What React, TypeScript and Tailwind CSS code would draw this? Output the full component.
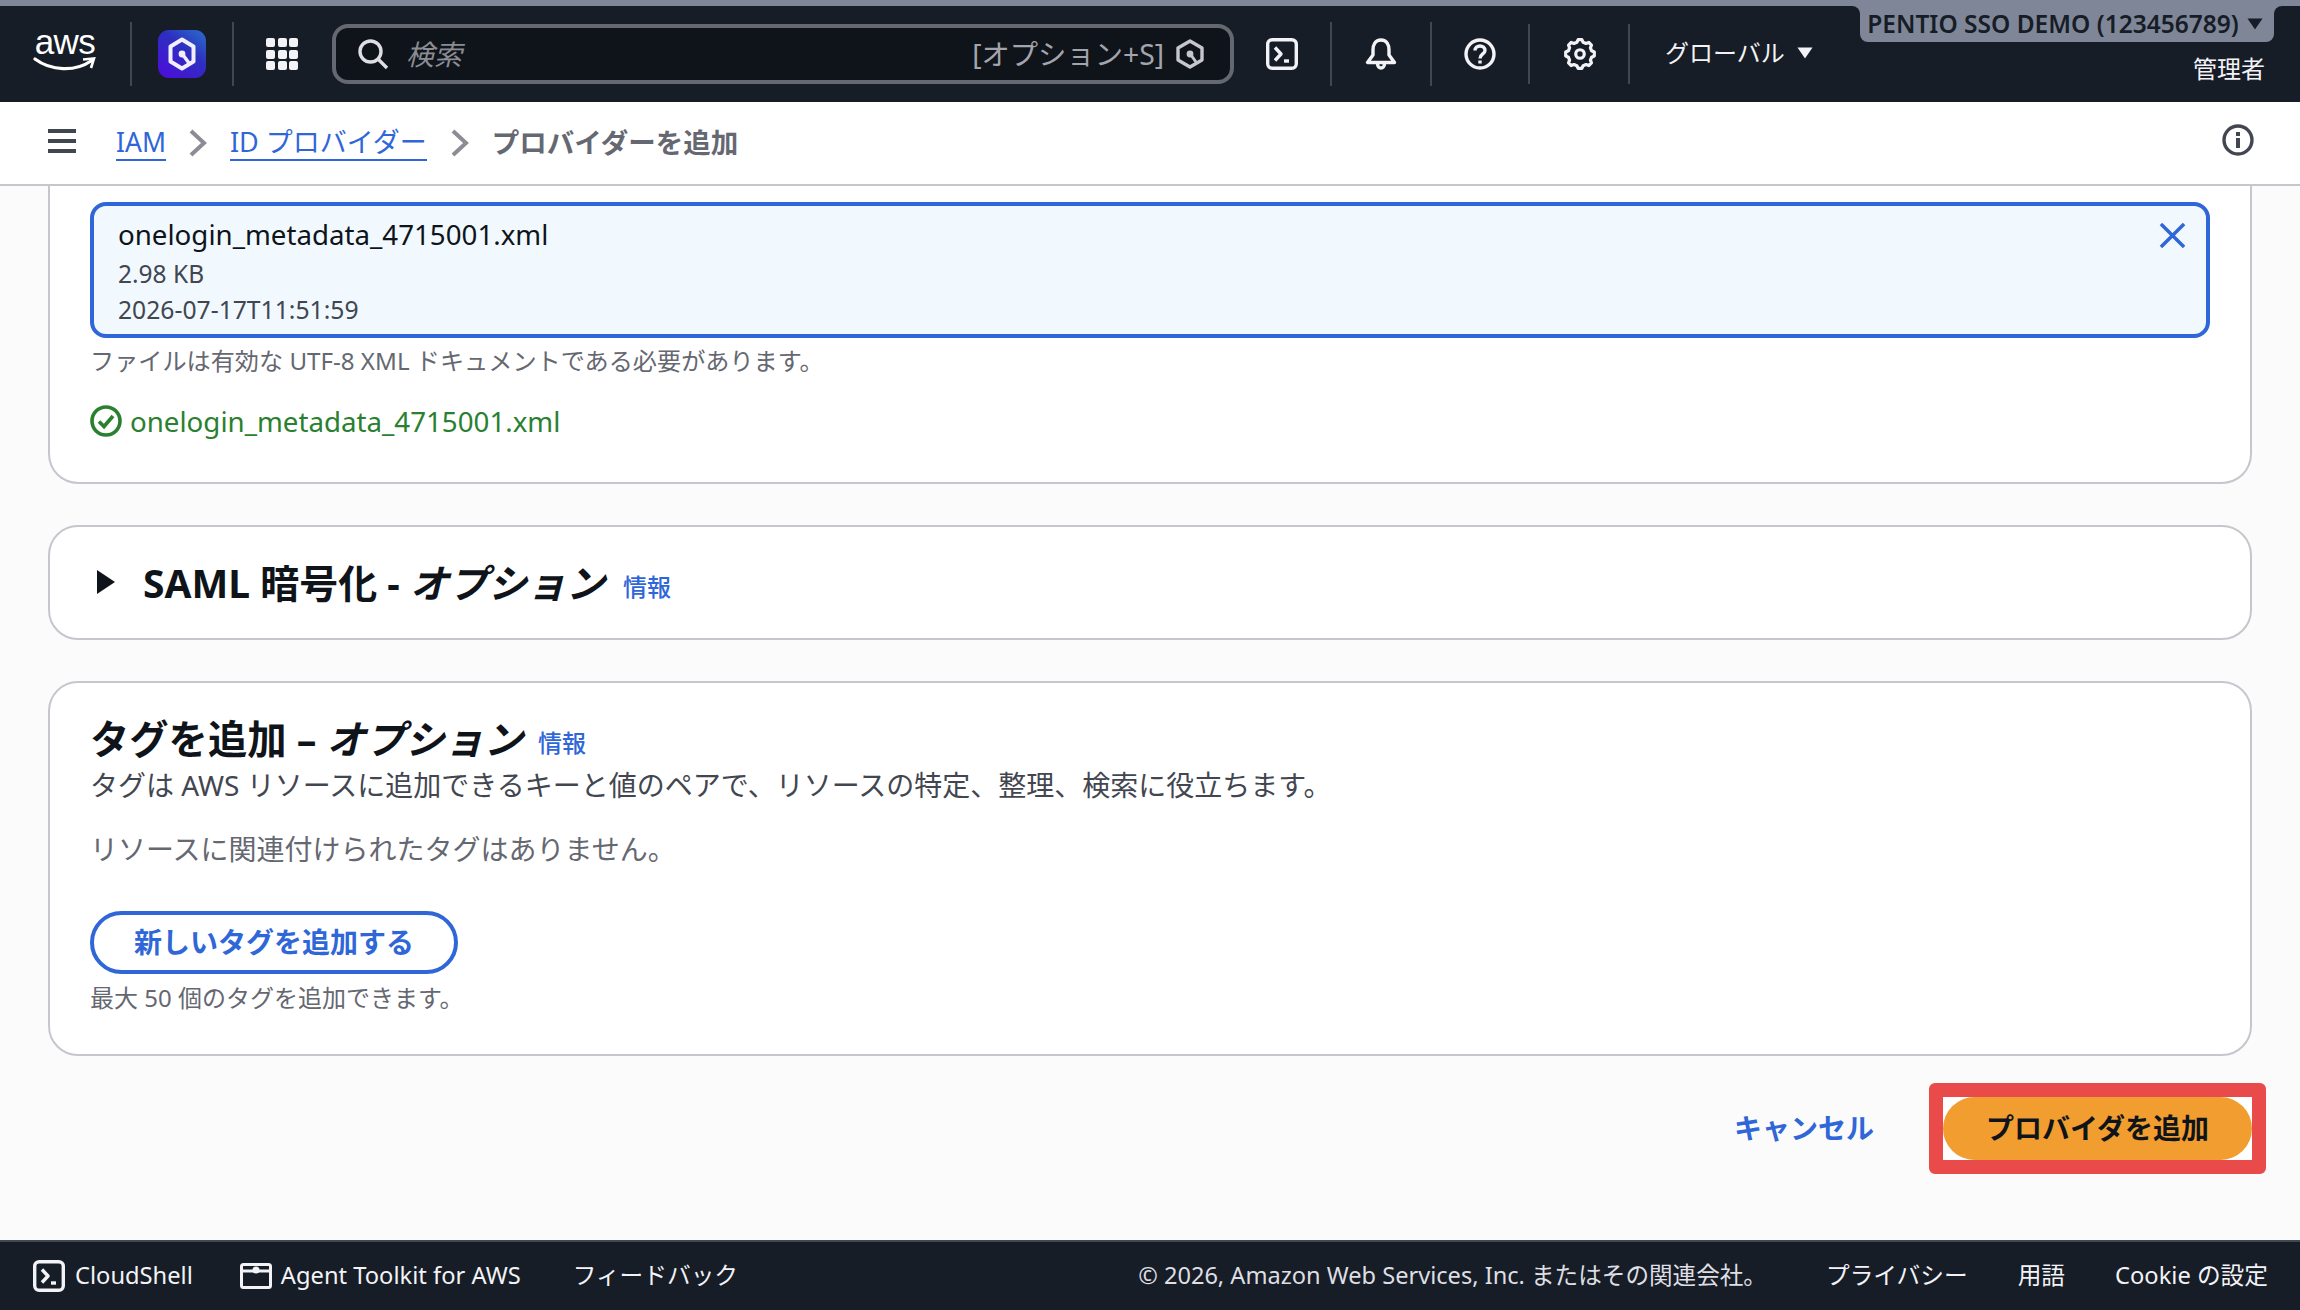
import React from 'react';

const FONT = "font-['Noto_Sans','Noto_Sans_CJK_JP',sans-serif]";

function QLogo() {
  return (
    <svg width="48" height="48" viewBox="0 0 48 48">
      <defs>
        <linearGradient id="qg" x1="1" y1="0" x2="0.2" y2="1">
          <stop offset="0" stopColor="#2a6fc9" />
          <stop offset="0.45" stopColor="#2d2fc0" />
          <stop offset="1" stopColor="#4a10d8" />
        </linearGradient>
      </defs>
      <rect width="48" height="48" rx="11" fill="url(#qg)" />
      <path d="M24 9.5 35.5 16.5V31.5L24 38.5 12.5 31.5V16.5Z" fill="none" stroke="#f3eefc" strokeWidth="4" strokeLinejoin="round" />
      <circle cx="24" cy="24" r="3.4" fill="#f3eefc" />
      <path d="M25 25 31 33" stroke="#f3eefc" strokeWidth="3.4" />
    </svg>
  );
}

function SmallHex() {
  return (
    <svg width="30" height="32" viewBox="0 0 30 32">
      <path d="M15 3 27 10V22L15 29 3 22V10Z" fill="none" stroke="#c6c6cd" strokeWidth="3.4" strokeLinejoin="round" />
      <circle cx="15" cy="16" r="3.4" fill="#c6c6cd" />
      <path d="M16 17 21 24" stroke="#c6c6cd" strokeWidth="3" />
    </svg>
  );
}

function ShellIcon() {
  return (
    <svg width="32" height="32" viewBox="0 0 32 32" fill="none" stroke="#f3f3f7" strokeWidth="3.4">
      <rect x="1.7" y="1.7" width="28.6" height="28.6" rx="4.5" />
      <path d="M9 9.5 15 16 9 22.5" strokeLinejoin="round" />
      <path d="M18 23H23" />
    </svg>
  );
}

function Divider() {
  return <div className="h-[64px] w-[2px] bg-[#424650]" />;
}

function Tri({ color }: { color: string }) {
  return (
    <svg width="16" height="12" viewBox="0 0 16 12" className="shrink-0">
      <path d="M0.5 0.5H15.5L8 11.5Z" fill={color} />
    </svg>
  );
}

function Chevron() {
  return (
    <svg width="18" height="28" viewBox="0 0 18 28" fill="none" stroke="#8c8c94" strokeWidth="4" className="shrink-0">
      <path d="M2 2 15 14 2 26" />
    </svg>
  );
}

function Header() {
  return (
    <header className="flex h-[96px] shrink-0 bg-[#161d26] text-[#f3f3f7]">
      <div className="flex w-[130px] flex-col items-center pt-[21px]">
        <span className="font-['Liberation_Sans',sans-serif] text-[35px] leading-[30px] tracking-[-0.5px] text-white">aws</span>
        <svg width="64" height="18" viewBox="0 0 64 18" fill="none" className="-mt-[1px]">
          <path d="M2 3C18 15 42 16 58 5" stroke="#fff" strokeWidth="3.2" strokeLinecap="round" />
          <path d="M50 3.5 61 2.5 58 12" stroke="#fff" strokeWidth="2.6" fill="none" />
        </svg>
      </div>
      <div className="pt-[16px]"><Divider /></div>
      <div className="flex w-[100px] justify-center pr-[1px] pt-[24px]"><QLogo /></div>
      <div className="pt-[16px]"><Divider /></div>
      <div className="grid w-[98px] shrink-0 grid-cols-[repeat(3,9px)] content-start justify-center gap-[2.5px] pr-[2px] pt-[32px]">
        {Array.from({ length: 9 }).map((_, i) => (
          <span key={i} className="h-[9px] w-[9px] rounded-[2px] bg-[#f3f3f7]" />
        ))}
      </div>
      <div className="pt-[18px]">
        <div className="flex h-[60px] w-[902px] items-center rounded-[16px] border-[4px] border-[#656871] bg-[#0f141a] pl-[21px] pr-[25px]">
          <svg width="32" height="32" viewBox="0 0 32 32" fill="none" stroke="#dedee3" strokeWidth="3.4">
            <circle cx="13.5" cy="13.5" r="10.5" />
            <path d="M21 21 30 30" />
          </svg>
          <span className="ml-[17px] text-[28px] italic text-[#8c8c94]">検索</span>
          <span className="ml-auto text-[28.3px] text-[#a4a4ad]">[オプション+S]</span>
          <span className="ml-[11px]"><SmallHex /></span>
        </div>
      </div>
      <div className="flex w-[96px] justify-center pt-[32px]"><ShellIcon /></div>
      <div className="pt-[16px]"><Divider /></div>
      <div className="flex w-[98px] justify-center pr-[1px] pt-[32px]">
        <svg width="32" height="33" viewBox="0 0 32 33" fill="none" stroke="#f3f3f7" strokeWidth="3.4" strokeLinejoin="round">
          <path d="M16 2C10 2 8 7 8 12V17L2.5 24.5H29.5L24 17V12C24 7 22 2 16 2Z" />
          <path d="M12.5 25.5C12.5 31.5 19.5 31.5 19.5 25.5" />
        </svg>
      </div>
      <div className="pt-[16px]"><Divider /></div>
      <div className="flex w-[96px] justify-center pt-[32px]">
        <svg width="32" height="32" viewBox="0 0 32 32" fill="none" stroke="#f3f3f7" strokeWidth="3.4">
          <circle cx="16" cy="16" r="14" />
          <path d="M11 12.5C11 6.5 21 6.5 21 12.5C21 16 16 16 16 20.5" />
          <path d="M16 22.5V25.5" />
        </svg>
      </div>
      <div className="pt-[18px]"><div className="h-[60px] w-[2px] bg-[#424650]" /></div>
      <div className="flex w-[98px] justify-center pl-[2px] pt-[32px]">
        <svg width="32" height="32" viewBox="0 0 24 24" fill="none" stroke="#f3f3f7" strokeWidth="2.4" strokeLinejoin="round">
          <path d="M9.67 3.2 10.6 1.2h2.8l.93 2 2.2.9 2.07-.76 1.98 1.98-.76 2.07.9 2.2 2 .93v2.96l-2 .93-.9 2.2.76 2.07-1.98 1.98-2.07-.76-2.2.9-.93 2h-2.8l-.93-2-2.2-.9-2.07.76-1.98-1.98.76-2.07-.9-2.2-2-.93v-2.96l2-.93.9-2.2-.76-2.07 1.98-1.98 2.07.76Z" />
          <circle cx="12" cy="12" r="3.2" />
        </svg>
      </div>
      <div className="pt-[18px]"><div className="h-[60px] w-[2px] bg-[#424650]" /></div>
      <div className="flex w-[230px] shrink-0 items-start gap-[12px] pl-[35px] pt-[31px]">
        <span className="text-[24px] leading-[32px] text-[#f3f3f7]">グローバル</span>
        <span className="pt-[10px]"><Tri color="#f3f3f7" /></span>
      </div>
      <div className="flex flex-col items-end">
        <div className="relative flex h-[36px] w-[414px] items-center justify-center gap-[8px] rounded-b-[8px] bg-[#7f8698] pr-[4px] text-[24.5px] font-semibold text-[#161d26]">
          <span>PENTIO SSO DEMO (123456789)</span>
          <Tri color="#161d26" />
          {/* the dark bar curves up into the tab on both sides */}
          <span className="absolute -left-[8px] top-0 h-[8px] w-[8px] bg-[#7f8698]">
            <span className="block h-[8px] w-[8px] rounded-tr-[8px] bg-[#161d26]" />
          </span>
          <span className="absolute -right-[8px] top-0 h-[8px] w-[8px] bg-[#7f8698]">
            <span className="block h-[8px] w-[8px] rounded-tl-[8px] bg-[#161d26]" />
          </span>
        </div>
        <span className="pr-[9px] pt-[12px] text-[24px] leading-[30px] text-[#f3f3f7]">管理者</span>
      </div>
    </header>
  );
}

function Breadcrumb() {
  return (
    <nav className="flex h-[84px] shrink-0 items-center border-b-[2px] border-[#c6c6cd] bg-white pl-[48px] pr-[46px]">
      <div className="-mt-[4px] flex w-[28px] flex-col gap-[6px]">
        <span className="h-[4px] bg-[#424650]" />
        <span className="h-[4px] bg-[#424650]" />
        <span className="h-[4px] bg-[#424650]" />
      </div>
      <a className="ml-[40px] border-b-[2px] border-[#2f66d8] text-[26.5px] leading-[34px] text-[#2f66d8]">IAM</a>
      <span className="ml-[23px]"><Chevron /></span>
      <a className="ml-[23px] border-b-[2px] border-[#2f66d8] text-[27px] leading-[34px] text-[#2f66d8]">ID プロバイダー</a>
      <span className="ml-[24px]"><Chevron /></span>
      <span className="ml-[23px] text-[27.5px] font-bold leading-[34px] text-[#656871]">プロバイダーを追加</span>
      <svg width="32" height="32" viewBox="0 0 32 32" fill="none" className="ml-auto -mt-[6px]">
        <circle cx="16" cy="16" r="14" stroke="#424650" strokeWidth="3.4" />
        <rect x="14" y="14" width="4" height="10" fill="#424650" />
        <rect x="14" y="8" width="4" height="4" fill="#424650" />
      </svg>
    </nav>
  );
}

function Info({ className }: { className: string }) {
  return <a className={`text-[24px] font-medium leading-[30px] text-[#2f66d8] ${className}`}>情報</a>;
}

function Main() {
  return (
    <main className="flex flex-1 flex-col bg-[#fbfbfb] px-[48px]">
      {/* upload section, scrolled so the top of the card is cut off */}
      <section className="h-[298px] rounded-b-[30px] border-[2px] border-t-0 border-[#c6c6cd] bg-white px-[40px] pt-[16px]">
        <div className="relative h-[136px] rounded-[16px] border-[4px] border-[#2f66d8] bg-[#f1f9ff] pl-[24px] pt-[11px]">
          <p className="text-[27.7px] leading-[34px] text-[#0f141a]">onelogin_metadata_4715001.xml</p>
          <p className="mt-[5px] text-[24.5px] leading-[36px] text-[#424650]">2.98 KB</p>
          <p className="text-[24.7px] leading-[36px] text-[#424650]">2026-07-17T11:51:59</p>
          <svg width="27" height="27" viewBox="0 0 28 28" fill="none" stroke="#2f66d8" strokeWidth="3.6" className="absolute right-[20px] top-[16px]">
            <path d="M2 2 26 26M26 2 2 26" />
          </svg>
        </div>
        <p className="mt-[7px] text-[24.15px] leading-[32px] text-[#656871]">ファイルは有効な UTF-8 XML ドキュメントである必要があります。</p>
        <div className="mt-[27px] flex items-center gap-[8px]">
          <svg width="32" height="32" viewBox="0 0 32 32" fill="none" stroke="#29802f" strokeWidth="3.6">
            <circle cx="16" cy="16" r="14" />
            <path d="M9 16.5 14 21.5 23 11" />
          </svg>
          <span className="text-[27.7px] leading-[34px] text-[#29802f]">onelogin_metadata_4715001.xml</span>
        </div>
      </section>

      <section className="mt-[41px] flex h-[115px] items-center rounded-[30px] border-[2px] border-[#c6c6cd] bg-white pl-[46px]">
        <svg width="20" height="24" viewBox="0 0 20 24" className="shrink-0 -mt-[2px]">
          <path d="M1 0 19 12 1 24Z" fill="#0f141a" />
        </svg>
        <h2 className="ml-[27px] text-[39px] font-bold leading-[48px] text-[#0f141a]">SAML 暗号化 - <i>オプション</i></h2>
        <Info className="ml-[18px] mt-[8px]" />
      </section>

      <section className="mt-[41px] h-[375px] rounded-[30px] border-[2px] border-[#c6c6cd] bg-white px-[40px] pt-[32px]">
        <div className="flex items-center">
          <h2 className="text-[39.3px] font-bold leading-[48px] text-[#0f141a]">タグを追加 – <i>オプション</i></h2>
          <Info className="ml-[15px] mt-[8px]" />
        </div>
        <p className="mt-[2px] text-[28px] leading-[40px] text-[#424650]">タグは AWS リソースに追加できるキーと値のペアで、リソースの特定、整理、検索に役立ちます。</p>
        <p className="mt-[24px] text-[28px] leading-[40px] text-[#656871]">リソースに関連付けられたタグはありません。</p>
        <button className="mt-[42px] block h-[63px] w-[368px] rounded-full border-[4px] border-[#2f66d8] pb-[2px] text-[28px] font-bold text-[#2f66d8]">新しいタグを追加する</button>
        <p className="mt-[8px] text-[24px] leading-[32px] text-[#656871]">最大 50 個のタグを追加できます。</p>
      </section>

      <div className="mt-[27px] flex items-center justify-end">
        <a className="mr-[55px] -mt-[2px] text-[28px] font-bold text-[#2f66d8]">キャンセル</a>
        <div className="-mr-[14px] rounded-[6px] border-[14px] border-[#e84b4a] bg-white">
          <button className="block h-[63px] w-[309px] rounded-full bg-[#f29d30] pb-[2px] text-[28px] font-bold text-[#0f141a]">プロバイダを追加</button>
        </div>
      </div>
    </main>
  );
}

function Footer() {
  return (
    <footer className="flex h-[70px] shrink-0 items-center border-t-[2px] border-[#424650] bg-[#161d26] pl-[33px] pr-[32px] text-[23.7px] text-[#f3f3f7]">
      <ShellIcon />
      <span className="ml-[10px]">CloudShell</span>
      <svg width="32" height="26" viewBox="0 0 32 26" fill="none" stroke="#f3f3f7" strokeWidth="3" className="ml-[47px]">
        <rect x="1.5" y="1.5" width="29" height="23" rx="2" />
        <path d="M2 8H30" />
        <circle cx="16" cy="7" r="3.5" fill="#f3f3f7" stroke="none" />
      </svg>
      <span className="ml-[9px]">Agent Toolkit for AWS</span>
      <span className="ml-[52px]">フィードバック</span>
      <span className="ml-auto text-[23.6px] text-[#dedee3]">© 2026, Amazon Web Services, Inc. またはその関連会社。</span>
      <span className="ml-[59px]">プライバシー</span>
      <span className="ml-[50px]">用語</span>
      <span className="ml-[50px]">Cookie の設定</span>
    </footer>
  );
}

export default function App() {
  return (
    <div className={`flex h-[1310px] w-[2300px] flex-col overflow-hidden ${FONT}`}>
      <div className="h-[6px] shrink-0 bg-[#7f8698]" />
      <Header />
      <Breadcrumb />
      <Main />
      <Footer />
    </div>
  );
}
